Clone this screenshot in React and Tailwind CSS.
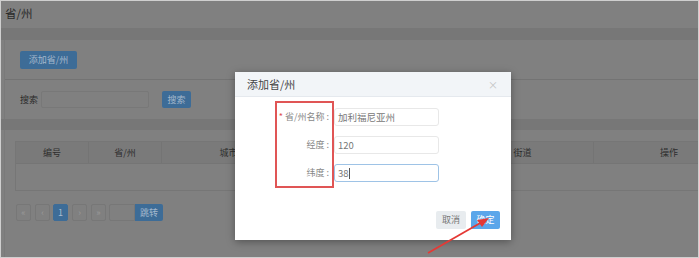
import React from 'react';

const font = { fontFamily: '"Noto Sans CJK SC", "Noto Sans", sans-serif' };

function PageBtn({ children, active }) {
  return (
    <div
      className={
        'w-[15px] h-[17px] flex items-center justify-center text-[9px] rounded-[2px] border ' +
        (active ? 'bg-[#3d6c97] border-[#3d6c97] text-[#a9bdd0]' : 'border-[#777] text-[#9a9a9a]')
      }
    >
      {children}
    </div>
  );
}

function FormRow({ label, required, value, focused }) {
  return (
    <div className="flex items-center h-[18px]">
      <div className="w-[94px] text-right text-[9px] text-[#888] whitespace-nowrap">
        {required && <span className="text-[#e05252] mr-[2px]">*</span>}
        {label} :
      </div>
      <div
        className={
          'ml-[5px] w-[105px] h-[18px] rounded-[3px] border px-[3px] flex items-center text-[9.5px] text-[#777] ' +
          (focused ? 'border-[#9ec3e6]' : 'border-[#e8e8e8]')
        }
      >
        {value}
        {focused && <span className="w-px h-[11px] bg-[#555]" />}
      </div>
    </div>
  );
}

export default function App() {
  return (
    <div className="relative w-[699px] h-[258px] overflow-hidden bg-[#808080] flex flex-col" style={font}>
      {/* page header */}
      <div className="h-[28px] shrink-0 flex items-center px-[5px] text-[11.5px] text-[#2a2a2a]">省/州</div>
      <div className="h-[12px] shrink-0 bg-[#777]" />

      {/* toolbar card */}
      <div className="ml-[4px] shrink-0 bg-[#808080] border-l border-[#7a7a7a]">
        <div className="h-[39px] flex items-center pl-[15px]">
          <div className="w-[57px] h-[18px] rounded-[2px] bg-[#3d6c97] text-[#a4b8cc] text-[9px] flex items-center justify-center">
            添加省/州
          </div>
        </div>
        <div className="h-[40px] border-t border-[#737373] flex items-center pl-[15px]">
          <span className="text-[9px] text-[#2a2a2a]">搜索</span>
          <div className="ml-[3px] w-[108px] h-[17px] rounded-[2px] border border-[#787878]" />
          <div className="ml-[13px] w-[29px] h-[17px] rounded-[2px] bg-[#3d6c97] text-[#a4b8cc] text-[9px] flex items-center justify-center">
            搜索
          </div>
        </div>
      </div>
      <div className="h-[11px] shrink-0 bg-[#777]" />

      {/* table card */}
      <div className="flex-1 ml-[4px] pl-[10px] pt-[11px] border-l border-[#7a7a7a]">
        <div className="w-[760px] border border-[#767676]">
          <div className="h-[22px] bg-[#7a7a7a] flex text-[9px] text-[#2e2e2e] border-b border-[#757575]">
            <div className="w-[73px] flex items-center justify-center border-r border-[#747474]">编号</div>
            <div className="w-[73px] flex items-center justify-center border-r border-[#747474]">省/州</div>
            <div className="w-[134px] flex items-center justify-center border-r border-[#747474]">城市</div>
            <div className="w-[156px] flex items-center justify-center border-r border-[#747474]">区县</div>
            <div className="w-[142px] flex items-center justify-center border-r border-[#747474]">街道</div>
            <div className="w-[150px] flex items-center justify-center">操作</div>
          </div>
          <div className="h-[26px]" />
        </div>
        <div className="mt-[13px] ml-px flex items-center">
          <PageBtn>«</PageBtn>
          <div className="w-[4px]" />
          <PageBtn>‹</PageBtn>
          <div className="w-[3px]" />
          <PageBtn active>1</PageBtn>
          <div className="w-[4px]" />
          <PageBtn>›</PageBtn>
          <div className="w-[4px]" />
          <PageBtn>»</PageBtn>
          <div className="w-[3px]" />
          <div className="w-[26px] h-[17px] border border-[#777] rounded-l-[2px]" />
          <div className="w-[28px] h-[17px] rounded-r-[2px] bg-[#3d6c97] text-[#a4b8cc] text-[9px] flex items-center justify-center">
            跳转
          </div>
        </div>
      </div>

      {/* modal */}
      <div className="absolute left-[235px] top-[72px] w-[276px] h-[168px] bg-white shadow-[0_2px_8px_rgba(0,0,0,0.35)] flex flex-col">
        <div className="h-[25px] shrink-0 bg-[#f2f5f8] border-b border-[#e5e9ee] flex items-center justify-between pl-[12px] pr-[13px]">
          <span className="text-[11px] text-[#444]">添加省/州</span>
          <span className="text-[10px] text-[#c4c4c4]">×</span>
        </div>
        <div className="pt-[11px] flex flex-col gap-[10px]">
          <FormRow label="省/州名称" required value="加利福尼亚州" />
          <FormRow label="经度" value="120" />
          <FormRow label="纬度" value="38" focused />
        </div>
        <div className="mt-auto mb-[11px] flex justify-end gap-[5px] pr-[11px]">
          <div className="w-[30px] h-[18px] rounded-[2px] bg-[#e8ecef] text-[#777] text-[9px] flex items-center justify-center">取消</div>
          <div className="w-[29px] h-[18px] rounded-[2px] bg-[#5ba6ea] text-white text-[9px] flex items-center justify-center">确定</div>
        </div>
      </div>

      {/* annotation */}
      <div className="absolute left-[275px] top-[101px] w-[59px] h-[87px] border-2 border-[#e05555]" />
      <svg className="absolute left-0 top-0" width="699" height="258">
        <line x1="428" y1="253" x2="482" y2="222" stroke="#e53935" strokeWidth="1.8" />
        <polygon points="489,218 477,220 482,227" fill="#e53935" />
      </svg>

      {/* screenshot frame */}
      <div className="absolute inset-0 border border-[#cfcfcf] pointer-events-none" />
    </div>
  );
}
